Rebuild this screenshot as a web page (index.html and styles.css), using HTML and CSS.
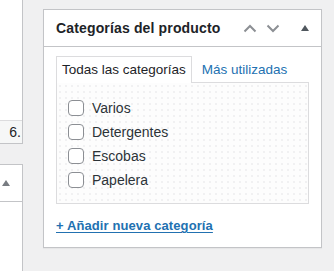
FILE: index.html
```html
<!DOCTYPE html>
<html lang="es">
<head>
<meta charset="utf-8">
<link rel="stylesheet" href="styles.css">
</head>
<body>
<div class="page">
  <div class="side">
    <div class="side-box">
      <div class="side-body"></div>
      <div class="side-foot">6.</div>
    </div>
    <div class="side-box2">
      <div class="side-head"><span class="tri"></span></div>
    </div>
  </div>
  <div class="panel">
    <div class="panel-head">
      <h2 class="title">Categorías del producto</h2>
      <button class="hbtn up" aria-label="Subir">
        <svg width="14" height="9" viewBox="0 0 14 9"><path d="M1.5 7.5 L7 2 L12.5 7.5" fill="none" stroke="#8c8f94" stroke-width="2"/></svg>
      </button>
      <button class="hbtn down" aria-label="Bajar">
        <svg width="14" height="9" viewBox="0 0 14 9"><path d="M1.5 1.5 L7 7 L12.5 1.5" fill="none" stroke="#8c8f94" stroke-width="2"/></svg>
      </button>
      <button class="hbtn toggle" aria-label="Cerrar"><span class="tri dark"></span></button>
    </div>
    <div class="inside">
      <ul class="tabs">
        <li class="tab active">Todas las categorías</li>
        <li class="tab">Más utilizadas</li>
      </ul>
      <div class="tab-panel">
        <ul class="checklist">
          <li><label><span class="cb"></span>Varios</label></li>
          <li><label><span class="cb"></span>Detergentes</label></li>
          <li><label><span class="cb"></span>Escobas</label></li>
          <li><label><span class="cb"></span>Papelera</label></li>
        </ul>
      </div>
      <a class="add" href="#">+ Añadir nueva categoría</a>
    </div>
  </div>
</div>
</body>
</html>
```
FILE: styles.css
```css
* { box-sizing: border-box; }
html, body { margin: 0; padding: 0; }
body {
  background: #f0f0f1;
  font-family: "Liberation Sans", Arial, sans-serif;
  font-size: 13px;
  color: #1d2327;
  width: 334px;
  height: 271px;
  overflow: hidden;
}
.page {
  display: flex;
  align-items: flex-start;
}
.side {
  width: 23px;
  flex: none;
  display: flex;
  flex-direction: column;
}
.side-box {
  background: #fff;
  border-right: 1px solid #c3c4c7;
  border-bottom: 1px solid #c3c4c7;
}
.side-body { height: 120px; }
.side-foot {
  height: 23px;
  background: #f6f7f7;
  border-top: 1px solid #dcdcde;
  text-align: right;
  padding-right: 1px;
  line-height: 22px;
  font-size: 14px;
  color: #1d2327;
}
.side-box2 {
  margin-top: 20px;
  background: #fff;
  border-top: 1px solid #c3c4c7;
  border-right: 1px solid #c3c4c7;
  height: 120px;
}
.side-head {
  height: 37px;
  border-bottom: 1px solid #c3c4c7;
  display: flex;
  align-items: center;
  padding-left: 2px;
}
.tri {
  display: inline-block;
  width: 0;
  height: 0;
  border-left: 4.5px solid transparent;
  border-right: 4.5px solid transparent;
  border-bottom: 6px solid #787c82;
}
.tri.dark { border-bottom-color: #50575e; }
.panel {
  margin-left: 20px;
  margin-top: 9px;
  width: 279px;
  background: #fff;
  border: 1px solid #c3c4c7;
  box-shadow: 0 1px 1px rgba(0,0,0,0.04);
}
.panel-head {
  height: 37px;
  border-bottom: 1px solid #c3c4c7;
  display: flex;
  align-items: center;
  padding-left: 12px;
}
.title {
  margin: 0;
  flex: 1;
  font-size: 14px;
  letter-spacing: 0.15px;
  font-weight: 700;
  color: #1d2327;
  white-space: nowrap;
}
.hbtn {
  border: 0;
  background: none;
  padding: 0;
  height: 36px;
  display: flex;
  align-items: center;
  justify-content: center;
}
.hbtn.up, .hbtn.down { width: 23px; }
.hbtn.toggle { width: 33px; margin-left: 4px; }
.inside {
  padding: 9px 12px 14px;
}
.tabs {
  list-style: none;
  margin: 0;
  padding: 0;
  display: flex;
  position: relative;
  z-index: 1;
  margin-bottom: -1px;
}
.tab {
  height: 27px;
  line-height: 26px;
  padding: 0 5px;
  font-size: 13.5px;
  color: #2271b1;
  border: 1px solid transparent;
  border-bottom: 0;
  margin-right: 4px;
}
.tab.active {
  color: #1d2327;
  background: #fff;
  border-color: #dcdcde;
}
.tab-panel {
  border: 1px solid #dcdcde;
  background-color: #fdfdfd;
  background-image: radial-gradient(circle, #ebebed 0.6px, transparent 0.9px);
  background-size: 6px 6px;
  padding: 13px 11px 10px;
  height: 122px;
  width: 253px;
}
.checklist {
  list-style: none;
  margin: 0;
  padding: 0;
}
.checklist li { height: 24px; display: flex; align-items: center; }
.checklist label { display: flex; align-items: center; font-size: 14px; color: #2c3338; }
.cb {
  width: 16px;
  height: 16px;
  border: 1px solid #8c8f94;
  border-radius: 4px;
  background: #fff;
  margin-right: 8px;
}
.add {
  display: inline-block;
  margin-top: 14px;
  color: #2271b1;
  font-weight: 700;
  font-size: 13px;
  letter-spacing: 0.1px;
  text-decoration: underline;
  text-underline-offset: 2px;
}
```
